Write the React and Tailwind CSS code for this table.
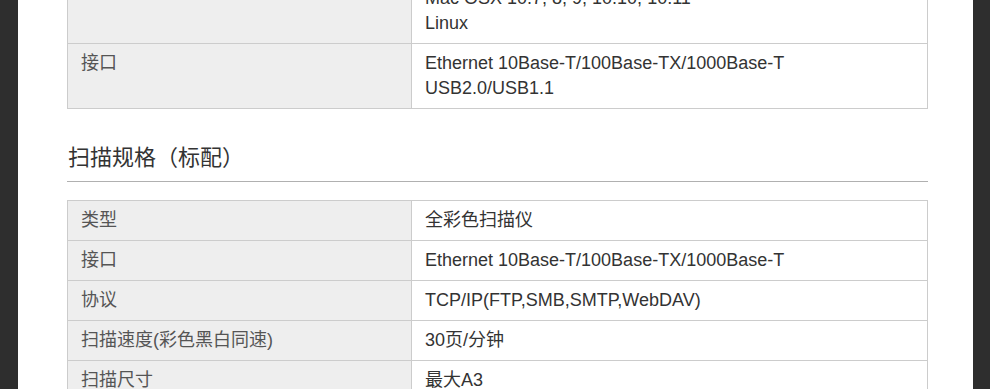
const font = { fontFamily: '"Liberation Sans", Arial, "Noto Sans CJK SC", sans-serif' };

const interfaceSpecs = [
  { label: "", lines: ["Mac OSX 10.7, 8, 9, 10.10, 10.11", "Linux"] },
  { label: "接口", lines: ["Ethernet 10Base-T/100Base-TX/1000Base-T", "USB2.0/USB1.1"] },
];

const scanSpecs = [
  { label: "类型", lines: ["全彩色扫描仪"] },
  { label: "接口", lines: ["Ethernet 10Base-T/100Base-TX/1000Base-T"] },
  { label: "协议", lines: ["TCP/IP(FTP,SMB,SMTP,WebDAV)"] },
  { label: "扫描速度(彩色黑白同速)", lines: ["30页/分钟"] },
  { label: "扫描尺寸", lines: ["最大A3"] },
];

function SpecTable({ rows }) {
  return (
    <table className="w-[861px] border-collapse text-[18px] leading-[25px]">
      <tbody>
        {rows.map((r, i) => (
          <tr key={i}>
            <td className="w-[344px] border border-[#cccccc] bg-[#eeeeee] px-[13px] py-[7px] align-top text-[#555555]">
              {r.label}
            </td>
            <td className="border border-[#cccccc] bg-white px-[13px] py-[7px] align-top text-[#333333]">
              {r.lines.map((l, j) => (
                <div key={j}>{l}</div>
              ))}
            </td>
          </tr>
        ))}
      </tbody>
    </table>
  );
}

export default function App() {
  return (
    <div className="flex h-[389px] w-[990px] overflow-hidden bg-white" style={font}>
      <div className="w-[18px] shrink-0 bg-[#2e2e2e]" />
      <div className="flex-1 pl-[49px]">
        <div className="mt-[-22px]">
          <SpecTable rows={interfaceSpecs} />
        </div>
        <h3 className="mt-[32px] w-[861px] border-b border-[#b0b0b0] pb-[6px] pl-[1px] text-[22px] leading-[34px] text-[#333333]">
          扫描规格（标配）
        </h3>
        <div className="mt-[18px]">
          <SpecTable rows={scanSpecs} />
        </div>
      </div>
      <div className="w-[17px] shrink-0 bg-[#2e2e2e]" />
    </div>
  );
}
